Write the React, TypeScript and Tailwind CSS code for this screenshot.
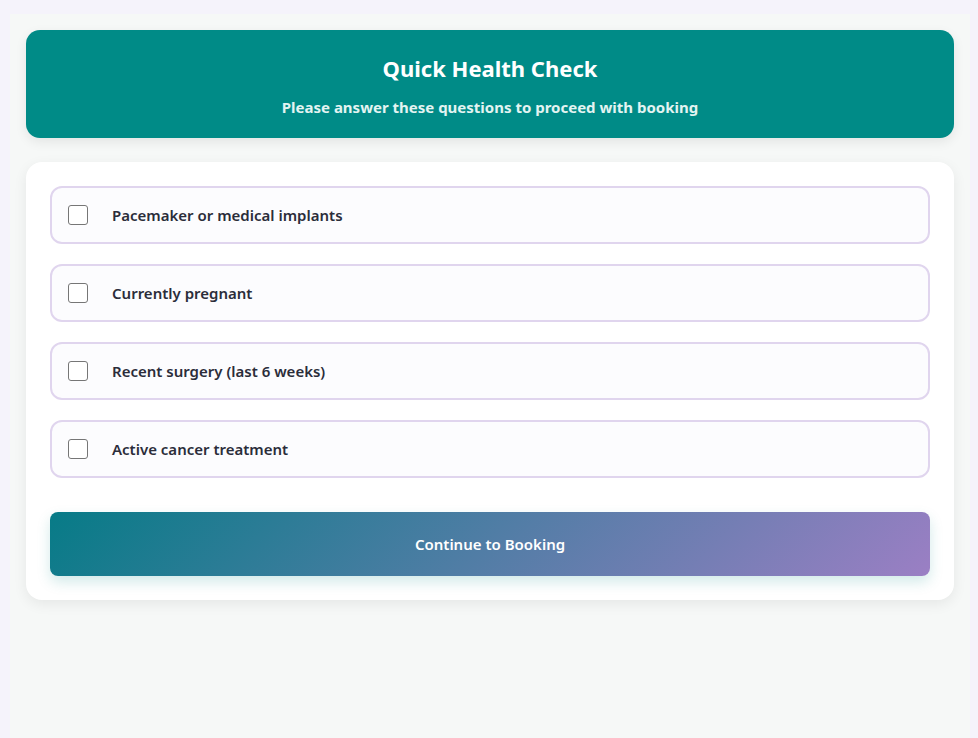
import React, { useState } from 'react';

const questions = [
  'Pacemaker or medical implants',
  'Currently pregnant',
  'Recent surgery (last 6 weeks)',
  'Active cancer treatment',
];

export default function App() {
  const [checked, setChecked] = useState<boolean[]>([false, false, false, false]);

  const toggle = (i: number) => {
    setChecked((prev) => prev.map((v, idx) => (idx === i ? !v : v)));
  };

  return (
    <div className="min-h-screen w-full bg-[#f5f3fb] pt-[14px]" style={{ fontFamily: '"Noto Sans", "Open Sans", sans-serif' }}>
      <div className="ml-[10px] w-[960px] min-h-[724px] bg-[#f6f8f7] px-4 pt-4 pb-6">
        <div className="rounded-[14px] bg-[#008b87] px-6 pt-[22px] pb-[20px] text-center shadow-[0_4px_12px_rgba(0,0,0,0.08)]">
          <h1 className="text-[22px] font-bold leading-[32px] text-white">Quick Health Check</h1>
          <p className="mt-[12px] text-[15px] font-bold leading-[22px] text-[#e3f4f2]">
            Please answer these questions to proceed with booking
          </p>
        </div>

        <div className="mt-[24px] rounded-[16px] bg-white p-6 shadow-[0_4px_14px_rgba(0,0,0,0.07)]">
          <div className="flex flex-col gap-[20px]">
            {questions.map((q, i) => (
              <label
                key={q}
                className="flex h-[58px] cursor-pointer items-center rounded-[12px] border-2 border-[#e0d5ee] bg-[#fcfcfe] pl-[16px]"
              >
                <span
                  onClick={() => toggle(i)}
                  className={`flex h-[20px] w-[20px] items-center justify-center rounded-[3px] border ${
                    checked[i] ? 'border-[#008b87] bg-[#008b87]' : 'border-[#767676] bg-white'
                  }`}
                >
                  {checked[i] && (
                    <svg width="14" height="14" viewBox="0 0 24 24" fill="none" stroke="white" strokeWidth="3">
                      <path d="M5 12l5 5 9-10" />
                    </svg>
                  )}
                </span>
                <span className="ml-[24px] text-[15px] font-semibold text-[#2b2d3a]">{q}</span>
              </label>
            ))}
          </div>

          <button className="mt-[34px] flex h-[64px] w-full items-center justify-center rounded-[8px] bg-[linear-gradient(135deg,#077b87,#9b7fc4)] text-[15px] font-semibold text-white shadow-[0_6px_14px_rgba(0,139,135,0.18)]">
            Continue to Booking
          </button>
        </div>
      </div>
    </div>
  );
}
